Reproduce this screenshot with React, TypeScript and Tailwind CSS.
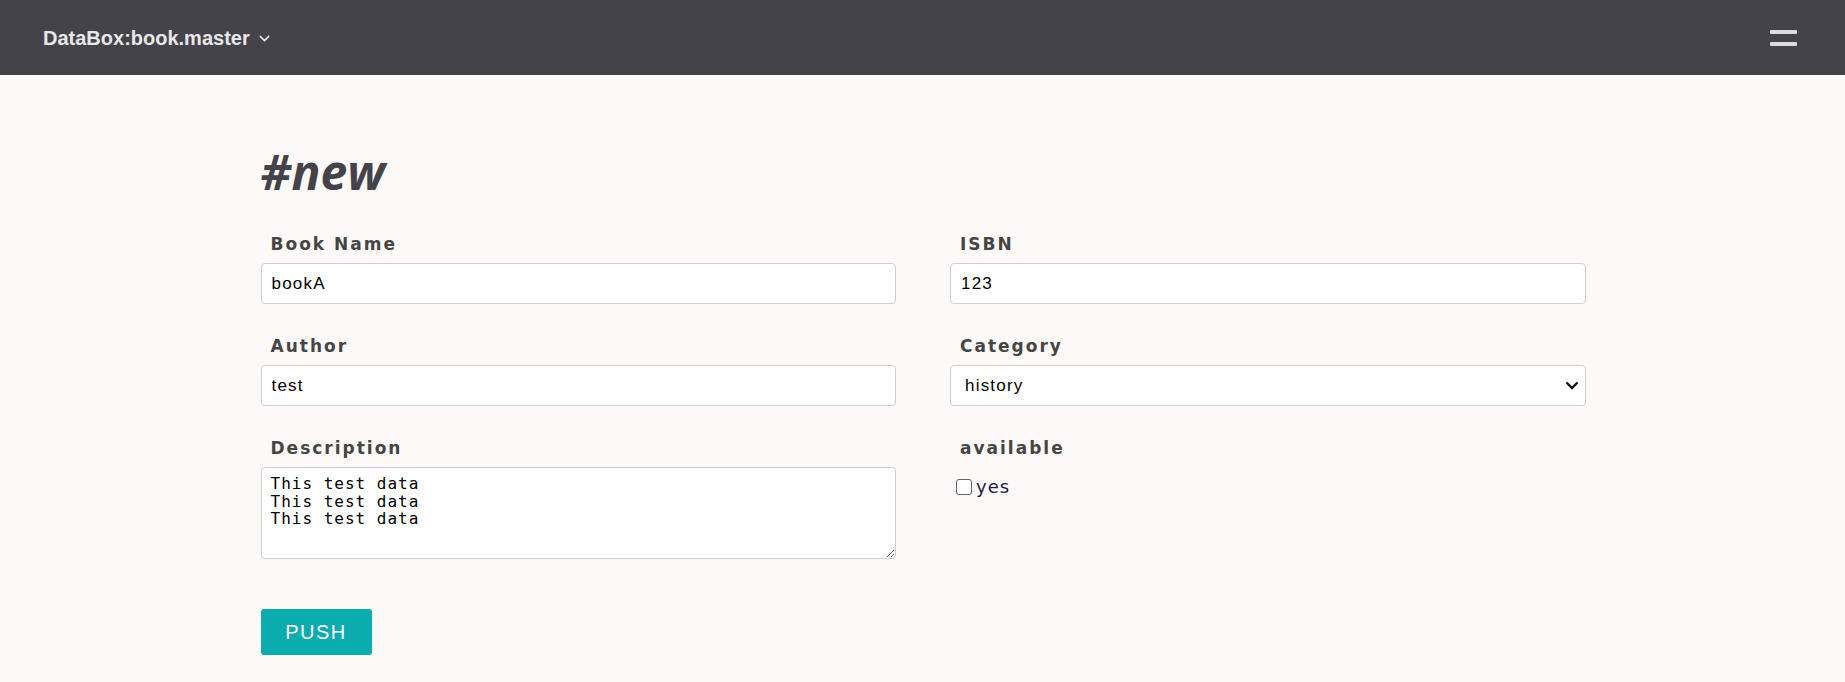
import { ChevronDown } from "lucide-react";

const labelCls =
  "block h-[24px] leading-[26px] pl-[10px] mb-[8px] text-[17px] font-bold tracking-[2px] text-[#454545] [font-family:'DejaVu_Sans',sans-serif]";
const inputCls =
  "block w-full h-[41px] px-[10px] rounded-[4px] border border-[#cfcfcf] bg-white text-[17px] tracking-[1.2px] text-black [font-family:'Liberation_Sans',Arial,sans-serif] outline-none";

function Field({ label, children }: { label: string; children: React.ReactNode }) {
  return (
    <div>
      <label className={labelCls}>{label}</label>
      {children}
    </div>
  );
}

export default function App() {
  return (
    <div className="min-h-[682px] bg-[#fdf9f8]">
      <header className="h-[75px] bg-[#444349] flex items-center justify-between pl-[43px] pr-[48px]">
        <div className="flex items-center gap-[6px] text-[#e8e8e8]">
          <span className="text-[20px] font-bold [font-family:'Liberation_Sans',Arial,sans-serif]">
            DataBox:book.master
          </span>
          <ChevronDown className="w-[17px] h-[17px] mt-[2px]" strokeWidth={2} />
        </div>
        <div className="flex flex-col gap-[8px]">
          <span className="block w-[27px] h-[4px] bg-[#dcdcdc] rounded-[1px]" />
          <span className="block w-[27px] h-[4px] bg-[#dcdcdc] rounded-[1px]" />
        </div>
      </header>

      <main className="w-[1326px] mx-auto pl-[1px] pt-[73px] pb-[28px]">
        <h1 className="text-[48px] leading-[48px] font-bold italic text-[#444349] [font-family:'Open_Sans',sans-serif] mb-[35px]">
          #new
        </h1>

        <form className="grid grid-cols-2 gap-x-[54px] gap-y-[29px]">
          <Field label="Book Name">
            <input className={inputCls} defaultValue="bookA" />
          </Field>
          <Field label="ISBN">
            <input className={inputCls} defaultValue="123" />
          </Field>
          <Field label="Author">
            <input className={inputCls} defaultValue="test" />
          </Field>
          <Field label="Category">
            <div className="relative">
              <select
                className={inputCls + " appearance-none pl-[14px] pr-[30px]"}
                defaultValue="history"
              >
                <option value="history">history</option>
                <option value="novel">novel</option>
                <option value="science">science</option>
              </select>
              <svg
                className="absolute right-[7px] top-[16px] w-[14px] h-[9px] pointer-events-none"
                viewBox="0 0 14 9"
                fill="none"
                stroke="#111"
                strokeWidth="2.4"
              >
                <path d="M1.5 1.5 L7 7 L12.5 1.5" />
              </svg>
            </div>
          </Field>
          <Field label="Description">
            <textarea
              className="block w-full h-[92px] px-[9px] pt-[7px] rounded-[4px] border border-[#cfcfcf] bg-white text-[16px] leading-[17.5px] tracking-[1px] text-black [font-family:'DejaVu_Sans_Mono',monospace] outline-none"
              defaultValue={"This test data\nThis test data\nThis test data"}
            />
          </Field>
          <div>
            <label className={labelCls}>available</label>
            <label className="flex items-center gap-[4px] pl-[6px] mt-[18px]">
              <input
                type="checkbox"
                className="w-[16px] h-[16px] m-0 appearance-none rounded-[3px] border border-[#666] bg-white"
              />
              <span className="text-[18px] leading-[20px] tracking-[1px] text-[#1b1b4b] [font-family:'DejaVu_Sans',sans-serif]">
                yes
              </span>
            </label>
          </div>
        </form>

        <button className="mt-[50px] w-[111px] h-[46px] rounded-[3px] bg-[#0aacae] text-white text-[20px] tracking-[1.5px] [font-family:'Liberation_Sans',Arial,sans-serif]">
          PUSH
        </button>
      </main>
    </div>
  );
}
